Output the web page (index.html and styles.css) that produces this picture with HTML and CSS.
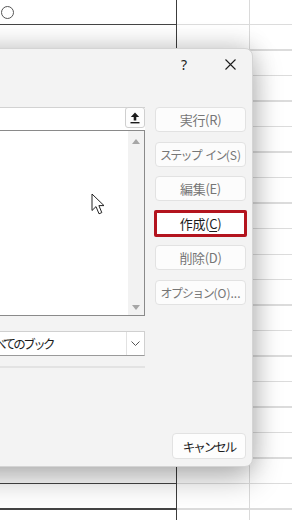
FILE: index.html
```html
<!DOCTYPE html>
<html lang="ja">
  <head>
    <meta charset="UTF-8" />
    <meta name="viewport" content="width=device-width, initial-scale=1.0" />
    <title>マクロ</title>
    <link rel="stylesheet" href="styles.css">
  </head>
  <body>
    <div class="sheet">
      <div class="col col-a">
        <div class="cell"><span class="circle"></span></div>
      </div>
      <div class="col col-b"></div>
      <div class="col col-c"></div>
    </div>

    <div class="dialog">
      <div class="titlebar">
        <button type="button" class="title-btn help">?</button>
        <button type="button" class="title-btn close">
          <svg width="11" height="11" viewBox="0 0 11 11">
            <path d="M0.5 0.5 L10.5 10.5 M10.5 0.5 L0.5 10.5" stroke="#1c1c1c" stroke-width="1.1" fill="none" />
          </svg>
        </button>
      </div>

      <div class="dialog-body">
        <div class="main">
          <div class="name-input">
            <span class="ref-btn">
              <svg width="10" height="12" viewBox="0 0 10 12">
                <path d="M5 0.5 L9.2 5 H6.3 V8.4 H3.7 V5 H0.8 Z" fill="#1c1c1c" />
                <rect x="0.5" y="10" width="9" height="1.4" fill="#1c1c1c" />
              </svg>
            </span>
          </div>
          <div class="macro-list">
            <div class="scrollbar">
              <span class="arrow arrow-up"></span>
              <span class="arrow arrow-down"></span>
            </div>
          </div>
          <div class="scope-select">
            <span class="scope-text">すべてのブック</span>
            <span class="chevron">
              <svg width="9" height="5" viewBox="0 0 9 5">
                <path d="M0.5 0.5 L4.5 4.5 L8.5 0.5" stroke="#555" stroke-width="1" fill="none" />
              </svg>
            </span>
          </div>
          <div class="divider"></div>
        </div>

        <div class="actions">
          <button type="button" class="btn">実行(R)</button>
          <button type="button" class="btn btn-step">ステップ イン<span class="key">(S)</span></button>
          <button type="button" class="btn">編集(E)</button>
          <button type="button" class="btn btn-focus">作成(<u>C</u>)</button>
          <button type="button" class="btn">削除(D)</button>
          <button type="button" class="btn btn-option">オプション<span class="key">(O)...</span></button>
          <button type="button" class="btn btn-cancel">キャンセル</button>
        </div>
      </div>
    </div>

    <svg class="cursor" width="15" height="23" viewBox="0 0 15 23">
      <path d="M1 1 V17.5 L5 13.6 L8 20.8 L10.8 19.6 L7.9 12.6 H13 Z" fill="#fff" stroke="#222" stroke-width="1" stroke-linejoin="round" />
    </svg>
  </body>
</html>
```

FILE: styles.css
```css
* {
  box-sizing: border-box;
}
body {
  margin: 0;
  width: 292px;
  height: 520px;
  overflow: hidden;
  position: relative;
  background: #ffffff;
  font-family: "Noto Sans CJK JP", "Noto Sans", sans-serif;
}

/* spreadsheet behind the dialog */
.sheet {
  display: flex;
  height: 520px;
}
.col {
  height: 100%;
}
.col-a {
  width: 177px;
  border-right: 1px solid #3c3c3c;
  background-image: repeating-linear-gradient(to bottom, transparent 0 24px, #454545 24px 25.5px);
}
.col-b {
  width: 73px;
  border-right: 1px solid #dadada;
  background-image: repeating-linear-gradient(to bottom, transparent 0 24px, #dcdcdc 24px 25.5px);
}
.col-c {
  flex: 1;
  background-image: repeating-linear-gradient(to bottom, transparent 0 24px, #dcdcdc 24px 25.5px);
}
.cell {
  height: 24px;
  padding: 6px 0 0 1px;
}
.circle {
  display: block;
  width: 13px;
  height: 13px;
  border: 1px solid #555;
  border-radius: 50%;
}

/* dialog */
.dialog {
  position: absolute;
  left: -120px;
  top: 48px;
  width: 373px;
  height: 419px;
  background: #f3f3f3;
  border: 1px solid #d4d4d4;
  border-radius: 8px;
  box-shadow: 0 12px 30px rgba(0, 0, 0, 0.28), 0 -4px 24px rgba(0, 0, 0, 0.14);
  display: flex;
  flex-direction: column;
}
.titlebar {
  height: 30px;
  display: flex;
  justify-content: flex-end;
}
.title-btn {
  height: 30px;
  border: none;
  background: none;
  padding: 0;
  color: #1c1c1c;
  display: flex;
  align-items: center;
  justify-content: center;
}
.help {
  width: 48px;
  font-family: "Noto Sans", sans-serif;
  font-size: 14px;
}
.close {
  width: 44px;
}
.dialog-body {
  flex: 1;
  display: flex;
  padding: 28px 6px 7px 12px;
}
.main {
  flex: 1;
  display: flex;
  flex-direction: column;
}
.name-input {
  height: 23px;
  background: #fff;
  border-top: 1px solid #d2d2d2;
  display: flex;
  justify-content: flex-end;
}
.ref-btn {
  width: 20px;
  height: 21px;
  margin-top: -1px;
  background: #fdfdfd;
  border: 1px solid #cfcfcf;
  border-radius: 3px;
  display: flex;
  align-items: center;
  justify-content: center;
}
.macro-list {
  height: 186px;
  background: #fff;
  border: 1px solid #8a8a8a;
  display: flex;
  justify-content: flex-end;
}
.scrollbar {
  width: 16px;
  background: #f2f2f2;
  display: flex;
  flex-direction: column;
  justify-content: space-between;
  align-items: center;
  padding: 8px 0 5px;
}
.arrow {
  width: 0;
  height: 0;
  border-left: 4.5px solid transparent;
  border-right: 4.5px solid transparent;
}
.arrow-up {
  border-bottom: 5px solid #a6a6a6;
}
.arrow-down {
  border-top: 5px solid #a6a6a6;
}
.scope-select {
  margin-top: 15px;
  height: 25px;
  background: #fff;
  border: 1px solid #d0d0d0;
  border-bottom-color: #9a9a9a;
  display: flex;
}
.scope-text {
  flex: 1;
  padding-left: 91px;
  font-size: 12.5px;
  line-height: 23px;
  color: #1c1c1c;
  letter-spacing: -2.6px;
  white-space: nowrap;
}
.chevron {
  width: 18px;
  border-left: 1px solid #e2e2e2;
  display: flex;
  align-items: center;
  justify-content: center;
}
.divider {
  margin-top: 10px;
  height: 2px;
  background: #e3e3e3;
}

/* buttons */
.actions {
  width: 91px;
  margin-left: 10px;
  display: flex;
  flex-direction: column;
  gap: 9.5px;
}
.btn {
  height: 25px;
  padding: 0;
  font-family: "Noto Sans CJK JP", "Noto Sans", sans-serif;
  font-size: 13px;
  letter-spacing: -0.3px;
  white-space: nowrap;
  color: #767676;
  background: #fcfcfc;
  border: 1px solid #e2e2e2;
  border-radius: 4px;
}
.btn u {
  text-decoration-thickness: 1px;
  text-underline-offset: 2px;
}
.btn .key {
  letter-spacing: 0;
}
.btn-step {
  font-size: 12px;
  letter-spacing: -1.7px;
  word-spacing: 3px;
}
.btn-option {
  font-size: 12px;
  letter-spacing: -1.4px;
}
.btn-focus {
  color: #1c1c1c;
  background: #fff;
  border: 2px solid #b3141e;
  border-radius: 1px;
  box-shadow: 0 0 0 1px #b3141e;
}
.btn-cancel {
  margin-top: auto;
  align-self: flex-end;
  width: 74px;
  height: 26px;
  font-size: 12.5px;
  letter-spacing: -2px;
  color: #1c1c1c;
  background: #fdfdfd;
}

.cursor {
  position: absolute;
  left: 91px;
  top: 193px;
}
```
